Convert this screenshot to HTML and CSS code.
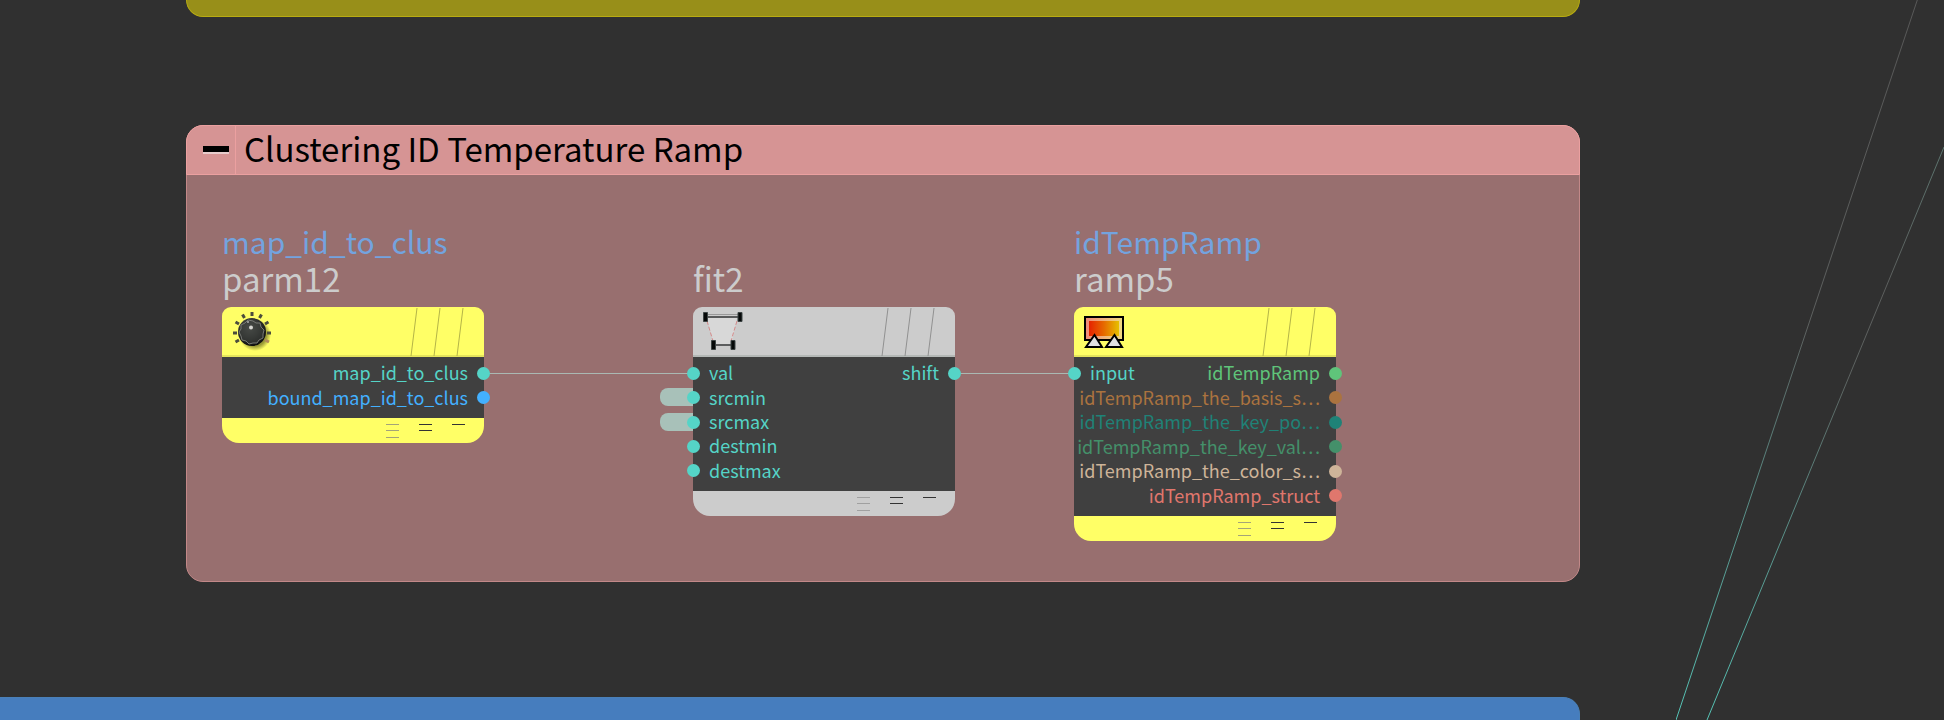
FILE: index.html
```html
<!DOCTYPE html>
<html lang="en">
<head>
<meta charset="utf-8">
<title>Network editor</title>
<link rel="stylesheet" href="styles.css">
</head>
<body>
<main class="canvas">
  <svg class="far-wires" width="268" height="720" viewBox="0 0 268 720" aria-hidden="true">
    <defs>
      <linearGradient id="w1" gradientUnits="userSpaceOnUse" x1="0" y1="0" x2="0" y2="720">
        <stop offset="0" stop-color="#585858"/><stop offset=".45" stop-color="#5d605f"/><stop offset="1" stop-color="#55c4b6"/>
      </linearGradient>
      <linearGradient id="w2" gradientUnits="userSpaceOnUse" x1="0" y1="147" x2="0" y2="720">
        <stop offset="0" stop-color="#5c756f"/><stop offset=".25" stop-color="#5c5e5d"/><stop offset=".4" stop-color="#5d6361"/><stop offset="1" stop-color="#55c4b6"/>
      </linearGradient>
    </defs>
    <path d="M241.300 0L0 720" stroke="url(#w1)"/>
    <path d="M268 147L31 720" stroke="url(#w2)"/>
  </svg>

  <section class="group group-olive" aria-label="Upper group"></section>

  <section class="group group-rose">
    <header class="group-head">
      <button class="collapse" type="button" aria-label="Collapse group"><span class="collapse-bar"></span></button>
      <h1 class="group-title">Clustering ID Temperature Ramp</h1>
    </header>
    <div class="group-body">

      <article class="node node-yellow">
        <div class="names"><p class="comment">map_id_to_clus</p><h2 class="name">parm12</h2></div>
        <div class="node-head">
          <svg class="icon" width="42" height="40" viewBox="0 0 42 40" aria-hidden="true">
            <defs>
              <radialGradient id="knob" cx=".42" cy=".35" r=".7"><stop offset="0" stop-color="#5a5d59"/><stop offset=".5" stop-color="#343634"/><stop offset="1" stop-color="#080908"/></radialGradient>
              <radialGradient id="shade"><stop offset=".7" stop-color="#6d6d20" stop-opacity=".7"/><stop offset="1" stop-color="#6d6d20" stop-opacity="0"/></radialGradient>
            </defs>
            <circle cx="24" cy="23" r="16" fill="url(#shade)"/>
            <g stroke="#4c4d3c" stroke-width="3"><path d="M21 0v4M11.500 2.500l2 3.500M30.500 2.500l-2 3.500M4.500 10l3.500 2M37.500 10l-3.500 2M2 21h4M40 21h-4M4.500 30l3.500-2"/><path d="M38 30l-4-2" stroke="#b08a5c"/></g>
            <circle cx="21" cy="20" r="14" fill="url(#knob)"/>
            <path d="M22 9l3 2 4 0 1 4 3 3-1 4 0 4-4 2-2 3-4 0-4 1-3-3-4-1-1-4-2-4 2-3 0-4 4-2 3-3z" fill="#3b3d3a" fill-opacity=".6" stroke="#777975" stroke-width="1"/>
            <circle cx="20" cy="15.500" r="2" fill="#d4d4d0"/><circle cx="17" cy="10" r="1" fill="#aaa"/>
          </svg>
          <svg class="flags" width="54" height="48" viewBox="0 0 54 48" aria-hidden="true"><path d="M7 0L1 48M30 0L24 48M53 0L47 48"/></svg>
        </div>
        <div class="ports ports-2">
          <div class="row teal"><span class="label out">map_id_to_clus</span><i class="dot"></i></div>
          <div class="row blue"><span class="label out">bound_map_id_to_clus</span><i class="dot"></i></div>
        </div>
        <div class="node-foot"><i class="bars three"></i><i class="bars two"></i><i class="bars one"></i></div>
      </article>

      <div class="wire wire-long"></div>

      <article class="node node-grey">
        <div class="names"><h2 class="name">fit2</h2></div>
        <div class="node-head">
          <svg class="icon" width="42" height="40" viewBox="0 0 42 40" aria-hidden="true">
            <path d="M5 6h30l-6 28H12z" fill="#d8d8d8"/>
            <path d="M4 2.500h32" stroke="#999"/><path d="M4 5h32" stroke="#333536" stroke-width="1.500"/><path d="M12 33h18" stroke="#333536" stroke-width="1.500"/>
            <path d="M5 9l6 20M35 9l-6 20" stroke="#d58a8a" stroke-dasharray="4 2" fill="none"/>
            <g fill="#050808" stroke="#3d4444"><path d="M1.500 .500h4v9h-4zM36 .500h4v9h-4zM9.500 28.500h4v9h-4zM29 28.500h4v9h-4z"/></g>
          </svg>
          <svg class="flags" width="54" height="48" viewBox="0 0 54 48" aria-hidden="true"><path d="M7 0L1 48M30 0L24 48M53 0L47 48"/></svg>
        </div>
        <div class="ports ports-5">
          <div class="row teal"><i class="dot"></i><span class="label">val</span><span class="label out">shift</span><i class="dot"></i></div>
          <div class="row teal"><i class="dot stub"></i><span class="label">srcmin</span></div>
          <div class="row teal"><i class="dot stub"></i><span class="label">srcmax</span></div>
          <div class="row teal"><i class="dot"></i><span class="label">destmin</span></div>
          <div class="row teal"><i class="dot"></i><span class="label">destmax</span></div>
        </div>
        <div class="node-foot"><i class="bars three"></i><i class="bars two"></i><i class="bars one"></i></div>
      </article>

      <div class="wire wire-short"></div>

      <article class="node node-yellow">
        <div class="names"><p class="comment">idTempRamp</p><h2 class="name">ramp5</h2></div>
        <div class="node-head">
          <svg class="icon" width="42" height="40" viewBox="0 0 42 40" aria-hidden="true">
            <defs><linearGradient id="heat"><stop offset="0" stop-color="#e62200"/><stop offset=".5" stop-color="#e66a00"/><stop offset="1" stop-color="#e6c000"/></linearGradient>
            <linearGradient id="rim"><stop offset="0" stop-color="#f08a78"/><stop offset="1" stop-color="#f0dc80"/></linearGradient></defs>
            <path d="M2 5h38v23H2z" fill="url(#rim)" stroke="#000" stroke-width="2"/>
            <path d="M6 9h30v15H6z" fill="url(#heat)"/>
            <path d="M11.500 23l7.500 12H3zM31.500 23l7.500 12H23z" fill="#e2e2e2" stroke="#000" stroke-width="2"/>
          </svg>
          <svg class="flags" width="54" height="48" viewBox="0 0 54 48" aria-hidden="true"><path d="M7 0L1 48M30 0L24 48M53 0L47 48"/></svg>
        </div>
        <div class="ports ports-6">
          <div class="row"><i class="dot teal"></i><span class="label teal">input</span><span class="label out green">idTempRamp</span><i class="dot green"></i></div>
          <div class="row brown"><span class="label out">idTempRamp_the_basis_s…</span><i class="dot"></i></div>
          <div class="row deep"><span class="label out">idTempRamp_the_key_po…</span><i class="dot"></i></div>
          <div class="row moss"><span class="label out">idTempRamp_the_key_val…</span><i class="dot"></i></div>
          <div class="row sand"><span class="label out">idTempRamp_the_color_s…</span><i class="dot"></i></div>
          <div class="row coral"><span class="label out">idTempRamp_struct</span><i class="dot"></i></div>
        </div>
        <div class="node-foot"><i class="bars three"></i><i class="bars two"></i><i class="bars one"></i></div>
      </article>
    </div>
  </section>

  <section class="group group-blue" aria-label="Lower group"></section>
</main>
</body>
</html>
```
FILE: styles.css
```css
* { box-sizing: border-box; }

body {
  margin: 0;
  background: #303030;
  font-family: "Noto Sans CJK KR", "Noto Sans", sans-serif;
}

h1, h2, p { margin: 0; font-weight: 400; }

.canvas {
  position: relative;
  display: flex;
  flex-direction: column;
  min-height: 100vh;
  padding-right: 364px;
  overflow: hidden;
}

.far-wires { position: absolute; top: 0; right: 0; fill: none; }

.group { border: 1px solid; border-radius: 17px; margin-left: 186px; }

.group-olive {
  height: 17px;
  background: #988f19;
  border-color: #b8ac12;
  border-width: 0 1px 1px;
  border-radius: 0 0 17px 17px;
}

.group-rose {
  margin-top: 108px;
  background: #986f6f;
  border-color: #c28888;
}

.group-blue {
  flex: 1;
  min-height: 24px;
  margin-top: 115px;
  margin-left: 0;
  background: #467dbe;
  border-color: #4a80b8;
  border-width: 1px 1px 0 0;
  border-radius: 0 17px 0 0;
}

.group-head {
  display: flex;
  height: 50px;
  margin: -1px -1px 0;
  background: #d69494;
  border: 1px solid #eba0a0;
  border-radius: 17px 17px 0 0;
}

.collapse {
  display: flex;
  align-items: center;
  justify-content: flex-end;
  width: 49px;
  padding: 0 6px 0 0;
  background: none;
  border: 0;
  border-right: 1px solid #eba0a0;
}

.collapse-bar { width: 26px; height: 8px; background: #000; border-bottom: 2px solid #e8cccc; }

.group-title { padding-left: 8px; font-size: 33px; line-height: 44px; color: #000; }

.group-body { display: flex; align-items: flex-start; padding: 47px 35px 40px; }

.node { flex: none; width: 262px; }

.names {
  display: flex;
  flex-direction: column;
  justify-content: flex-end;
  height: 85px;
  padding-bottom: 10px;
}

.comment, .name { white-space: nowrap; }
.comment { font-size: 30px; line-height: 36px; color: #73a3df; }
.name { font-size: 33px; line-height: 38px; color: #cccccc; }

.node-yellow { --skin: #ffff66; --seam: #e4e45c; --slash: #b4b448; --faint: #a4a478; }
.node-grey { --skin: #cccccc; --seam: #b4b8b6; --slash: #909090; --faint: #a0a0a0; }

.node-head {
  display: flex;
  justify-content: space-between;
  height: 50px;
  padding: 1px 20px 0 9px;
  background: var(--skin);
  border-bottom: 2px solid var(--seam);
  border-radius: 9px 9px 0 0;
}

.icon { margin-top: 4px; fill: none; }
.flags { fill: none; stroke: var(--slash); }

.ports { display: flex; flex-direction: column; padding: 4px 0 8px; background: #404040; }
.ports-2 { min-height: 61px; }
.ports-5 { min-height: 134px; }
.ports-6 { min-height: 159px; }

.row { display: flex; flex: 1; align-items: center; }

.label { padding: 0 0 2px 9px; font-size: 18px; line-height: 22px; white-space: nowrap; }
.out { margin-left: auto; padding: 0 9px 2px 0; }

.dot {
  position: relative;
  flex: none;
  width: 13px;
  height: 13px;
  background: currentColor;
  border-radius: 50%;
}
.dot:first-child { margin-left: -6px; }
.dot:last-child { margin-right: -6px; }

/* Tab of an input whose wire is hidden, tucked under the dot */
.stub { background: none; }
.stub::before, .stub::after { content: ""; position: absolute; }
.stub::before { top: -3px; right: 7px; width: 33px; height: 18px; background: #a8c1b9; border-radius: 8px 0 0 8px; }
.stub::after { inset: 0; background: currentColor; border-radius: 50%; }

.teal { color: #55d4c7; }
.blue { color: #43b0ff; }
.green { color: #5fc47a; }
.brown { color: #ab733f; }
.deep { color: #1f8277; }
.moss { color: #44906a; }
.sand { color: #ceb499; }
.coral { color: #e0776d; }

.node-foot {
  display: flex;
  justify-content: flex-end;
  gap: 20px;
  height: 25px;
  padding: 6px 19px 0 0;
  background: var(--skin);
  border-radius: 0 0 17px 17px;
}

.bars { width: 13px; border-top: 1px solid #333; }
.two { height: 7px; border-bottom: 1px solid #333; }
.three {
  height: 14px;
  border-color: var(--faint);
  border-bottom: 1px solid var(--faint);
  background: linear-gradient(var(--faint), var(--faint)) 0 5px / 13px 1px no-repeat;
}

.wire { flex: none; height: 1px; margin-top: 151px; background: #aab9b3; }
.wire-long { width: 209px; }
.wire-short { width: 119px; }
```
